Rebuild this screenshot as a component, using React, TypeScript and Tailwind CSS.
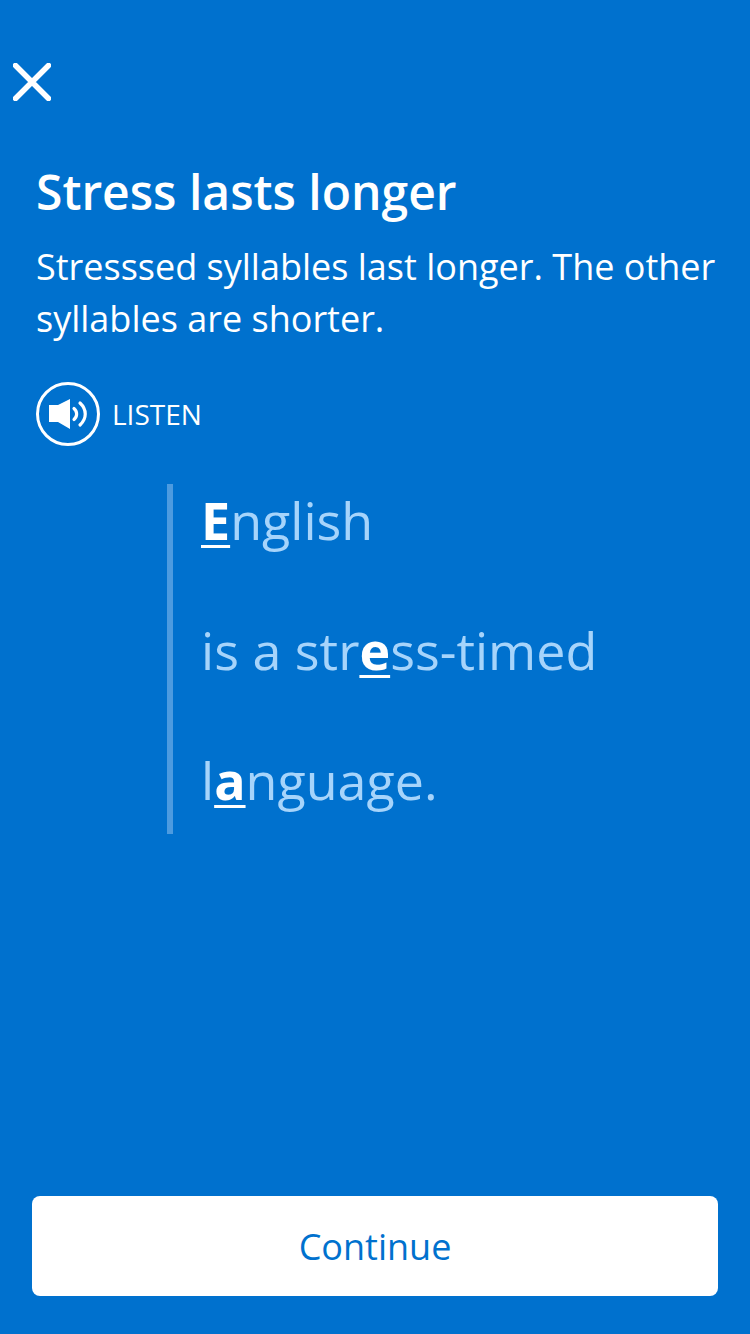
const stressLines = [
  { before: '', stress: 'E', after: 'nglish' },
  { before: 'is a str', stress: 'e', after: 'ss-timed' },
  { before: 'l', stress: 'a', after: 'nguage.' },
];

function CloseIcon() {
  return (
    <svg width="38" height="38" viewBox="0 0 38 38" className="block">
      <path d="M2.500 2.500L35.500 35.500M35.500 2.500L2.500 35.500" stroke="#fff" strokeWidth="5.500" strokeLinecap="round" fill="none" />
    </svg>
  );
}

function SpeakerIcon() {
  return (
    <svg width="64" height="64" viewBox="0 0 64 64" className="block">
      <circle cx="32" cy="32" r="30.500" stroke="#fff" strokeWidth="3" fill="none" />
      <path d="M13 23H22L34 17V47L22 40H13Z" fill="#fff" />
      <path d="M38 26.500C41.500 29.500 41.500 34.500 38 37.500" stroke="#fff" strokeWidth="3.200" strokeLinecap="round" fill="none" />
      <path d="M44 21C51 27.500 51 36.500 44 43" stroke="#fff" strokeWidth="3.200" strokeLinecap="round" fill="none" />
    </svg>
  );
}

export default function App() {
  return (
    <div className="h-[1334px] w-[750px] bg-[#0071ce] flex flex-col font-['Open_Sans',sans-serif] text-white overflow-hidden">
      <div className="pt-[63px] pl-[13px]">
        <CloseIcon />
      </div>

      <div className="pl-[36px] pr-[20px] mt-[60px]">
        <h1 className="text-[48px] leading-[62px] font-semibold">Stress lasts longer</h1>
        <p className="text-[36px] leading-[52px] mt-[18px]">
          Stresssed syllables last longer. The other syllables are shorter.
        </p>
        <div className="flex items-center gap-[12px] mt-[37px]">
          <SpeakerIcon />
          <span className="text-[28px] leading-[36px] pb-[1px]">LISTEN</span>
        </div>
      </div>

      <div className="ml-[167px] mt-[38px] h-[350px] border-l-[6px] border-[#4c9be0] pl-[28px] flex flex-col text-[52px] leading-[130px] text-[#a6d4fb]">
        {stressLines.map((line, index) => (
          <div key={index} className="h-[130px] -mt-[29px] mb-[29px] whitespace-nowrap">
            {line.before}
            <span className="font-bold text-white underline decoration-[3px] underline-offset-[5px] [text-decoration-skip-ink:none]">
              {line.stress}
            </span>
            {line.after}
          </div>
        ))}
      </div>

      <div className="mt-auto px-[32px] pb-[38px]">
        <button className="w-full h-[100px] bg-white rounded-[8px] text-[#0071ce] text-[36px] pt-[2px]">Continue</button>
      </div>
    </div>
  );
}
